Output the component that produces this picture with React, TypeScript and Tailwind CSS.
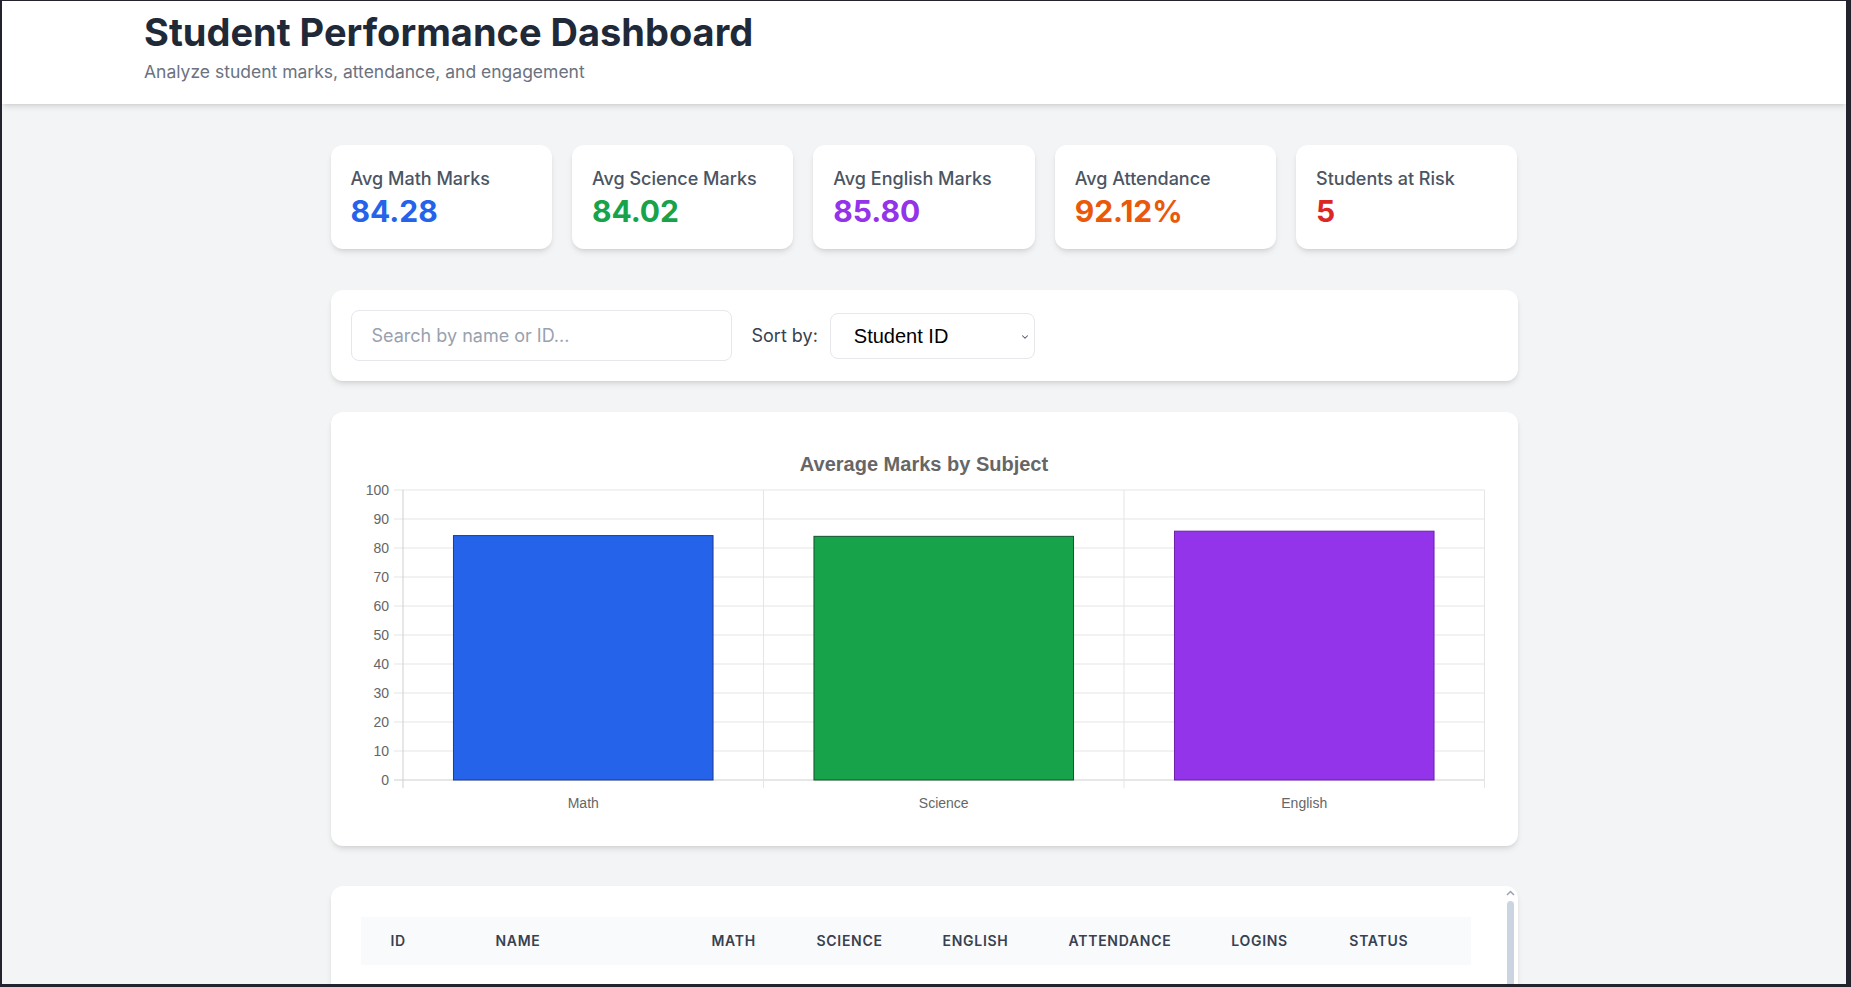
import { ChevronDown } from 'lucide-react'

const stats = [
  { label: 'Avg Math Marks', value: '84.28', color: 'text-[#2563eb]' },
  { label: 'Avg Science Marks', value: '84.02', color: 'text-[#16a34a]' },
  { label: 'Avg English Marks', value: '85.80', color: 'text-[#9333ea]' },
  { label: 'Avg Attendance', value: '92.12%', color: 'text-[#ea580c]' },
  { label: 'Students at Risk', value: '5', color: 'text-[#dc2626]' },
]

const subjects = [
  { name: 'Math', value: 84.28, fill: '#2563eb', stroke: '#1e3a8a' },
  { name: 'Science', value: 84.02, fill: '#16a34a', stroke: '#14532d' },
  { name: 'English', value: 85.8, fill: '#9333ea', stroke: '#6b21a8' },
]

const columns = [
  { label: 'ID', w: 'w-[105px]' },
  { label: 'Name', w: 'w-[216px]' },
  { label: 'Math', w: 'w-[105px]' },
  { label: 'Science', w: 'w-[125px]' },
  { label: 'English', w: 'w-[126px]' },
  { label: 'Attendance', w: 'w-[162px]' },
  { label: 'Logins', w: 'w-[118px]' },
  { label: 'Status', w: '' },
]

function MarksChart() {
  const left = 48
  const right = 1129.5
  const top = 54
  const bottom = 344
  const band = (right - left) / 3
  const barW = band * 0.72
  const y = (v: number) => bottom - v * ((bottom - top) / 100)
  const ticks = [0, 10, 20, 30, 40, 50, 60, 70, 80, 90, 100]

  return (
    <svg width="100%" height="386" className="block" style={{ fontFamily: '"Liberation Sans", Arial, sans-serif' }}>
      <text x="569" y="35" textAnchor="middle" fontSize="20" fontWeight="700" fill="#666">
        Average Marks by Subject
      </text>
      {ticks.map((t) => (
        <g key={t}>
          <line x1={left - 9} x2={right} y1={y(t)} y2={y(t)} stroke={t === 0 ? '#cfcfcf' : '#e5e5e5'} strokeWidth="1" />
          <text x={left - 14} y={y(t) + 5} textAnchor="end" fontSize="14" fill="#666">
            {t}
          </text>
        </g>
      ))}
      {[0, 1, 2, 3].map((i) => (
        <line
          key={i}
          x1={left + i * band}
          x2={left + i * band}
          y1={top}
          y2={bottom + 8}
          stroke={i === 0 ? '#cfcfcf' : '#e5e5e5'}
          strokeWidth="1"
        />
      ))}
      {subjects.map((s, i) => {
        const cx = left + band * i + band / 2
        return (
          <g key={s.name}>
            <rect
              x={cx - barW / 2}
              y={y(s.value)}
              width={barW}
              height={bottom - y(s.value)}
              fill={s.fill}
              stroke={s.stroke}
              strokeWidth="1"
            />
            <text x={cx} y={372} textAnchor="middle" fontSize="14" fill="#666">
              {s.name}
            </text>
          </g>
        )
      })}
    </svg>
  )
}

export default function App() {
  return (
    <div
      className="h-[987px] overflow-hidden border-l-2 border-t border-r-[5px] border-b-[3px] border-[#23232d] bg-gray-100 text-gray-800"
      style={{ fontFamily: 'Inter, "Noto Sans", sans-serif' }}
    >
      <header className="bg-white shadow-md pl-[142px] pt-[11px] pb-5">
        <h1 className="text-[38px] font-bold text-[#1f2937] leading-10">Student Performance Dashboard</h1>
        <p className="mt-2 text-[17.5px] leading-6 text-[#6b7280]">Analyze student marks, attendance, and engagement</p>
      </header>

      <main className="max-w-[1187px] mx-auto pt-[41px]">
        <div className="grid grid-cols-5 gap-5 mb-[41px]">
          {stats.map((s) => (
            <div key={s.label} className="bg-white rounded-xl shadow-md p-5">
              <div className="text-lg font-medium text-[#4b5563] leading-7">{s.label}</div>
              <div className={`text-3xl font-bold leading-9 ${s.color}`}>{s.value}</div>
            </div>
          ))}
        </div>

        <div className="bg-white rounded-xl shadow-md p-5 mb-[31px] flex items-center">
          <input
            type="text"
            placeholder="Search by name or ID..."
            className="w-[381px] h-[51px] px-5 text-lg border border-gray-200 rounded-lg placeholder:text-gray-400 outline-none"
          />
          <span className="ml-5 text-lg text-[#374151]">Sort by:</span>
          <div className="relative ml-3">
            <select
              className="appearance-none w-[205px] h-[46px] pl-[23px] pr-8 text-[20px] text-black bg-white border border-gray-200 rounded-lg outline-none"
              style={{ fontFamily: '"Liberation Sans", Arial, sans-serif' }}
              defaultValue="id"
            >
              <option value="id">Student ID</option>
              <option value="name">Name</option>
              <option value="math">Math</option>
            </select>
            <ChevronDown className="absolute right-[5px] top-[19px] h-2.5 w-2.5 text-gray-600 pointer-events-none" strokeWidth={2.5} />
          </div>
        </div>

        <div className="bg-white rounded-xl shadow-md p-6 mb-10">
          <MarksChart />
        </div>

        <div className="bg-white rounded-xl shadow-md flex h-[520px] overflow-hidden">
          <div className="flex-1 pl-[30px] pr-8 pt-[31px]">
            <table className="w-full text-left border-collapse">
              <thead>
                <tr className="bg-gray-50">
                  {columns.map((c) => (
                    <th
                      key={c.label}
                      className={`${c.w} px-[30px] py-3.5 text-sm font-semibold uppercase tracking-wider text-[#374151]`}
                    >
                      {c.label}
                    </th>
                  ))}
                </tr>
              </thead>
              <tbody />
            </table>
          </div>
          <div className="w-[15px] flex flex-col items-center pt-[4px]">
            <svg width="9" height="6" viewBox="0 0 9 6" className="mb-[5px]">
              <path d="M1 5 L4.5 1.5 L8 5" stroke="#9ca3af" strokeWidth="1.5" fill="none" />
            </svg>
            <div className="w-[7px] flex-1 rounded-full bg-[#cbd5e1]" />
          </div>
        </div>
      </main>
    </div>
  )
}
